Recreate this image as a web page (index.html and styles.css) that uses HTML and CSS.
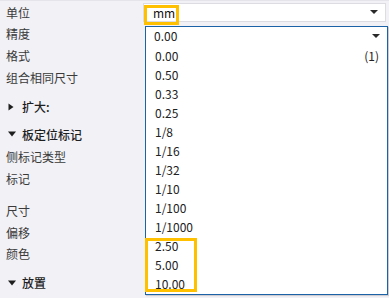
FILE: index.html
```html
<!DOCTYPE html>
<html lang="zh-CN">
<head>
    <meta charset="UTF-8">
    <title>尺寸精度</title>
    <link rel="stylesheet" href="styles.css">
</head>
<body>

<div class="panel">
    <!-- Property rows -->
    <div class="row first">
        <span class="label">单位</span>
        <div class="combo">
            <span class="combo-text">mm</span>
            <span class="arrow"></span>
        </div>
    </div>
    <div class="row"><span class="label">精度</span></div>
    <div class="row"><span class="label">格式</span></div>
    <div class="row"><span class="label">组合相同尺寸</span></div>

    <div class="row section s1">
        <svg class="tri" width="8" height="8" viewBox="0 0 8 8"><path d="M0.5 0.5 L5.5 4 L0.5 7.5 Z" fill="#1e1e1e"/></svg>
        <span class="heading">扩大:</span>
    </div>

    <div class="row section s2">
        <svg class="tri" width="8" height="8" viewBox="0 0 8 8"><path d="M0 1.5 L8 1.5 L4 6.5 Z" fill="#1e1e1e"/></svg>
        <span class="heading">板定位标记</span>
    </div>
    <div class="row tight"><span class="label">侧标记类型</span></div>
    <div class="row"><span class="label">标记</span></div>
    <div class="spacer"></div>
    <div class="row"><span class="label">尺寸</span></div>
    <div class="row"><span class="label">偏移</span></div>
    <div class="row"><span class="label">颜色</span></div>

    <div class="row section s3">
        <svg class="tri" width="8" height="8" viewBox="0 0 8 8"><path d="M0 1.5 L8 1.5 L4 6.5 Z" fill="#1e1e1e"/></svg>
        <span class="heading">放置</span>
    </div>

    <!-- Open precision dropdown -->
    <div class="dropdown">
        <div class="dd-head">
            <span>0.00</span>
            <span class="arrow"></span>
        </div>
        <ul class="dd-list">
            <li><span>0.00</span><span>(1)</span></li>
            <li>0.50</li>
            <li>0.33</li>
            <li>0.25</li>
            <li>1/8</li>
            <li>1/16</li>
            <li>1/32</li>
            <li>1/10</li>
            <li>1/100</li>
            <li>1/1000</li>
            <li>2.50</li>
            <li>5.00</li>
            <li>10.00</li>
        </ul>
    </div>

    <!-- Highlight marks -->
    <div class="mark mark-unit"></div>
    <div class="mark mark-values"></div>
</div>

</body>
</html>
```

FILE: styles.css
```css
body {
    margin: 0;
    background-color: #f1f1f6;
    font-family: "Noto Sans CJK SC", "Noto Sans", sans-serif;
    font-size: 12px;
    color: #333;
}
.panel {
    position: relative;
    width: 389px;
    height: 298px;
    overflow: hidden;
    border-top: 1px solid #e4e4ea;
    box-sizing: border-box;
}
.row {
    display: flex;
    align-items: center;
    height: 21.6px;
    padding-left: 6px;
}
.row.first {
    margin-top: 0.5px;
}
.label {
    width: 137px;
    color: #3a3a3a;
}
.section {
    padding-left: 8px;
    gap: 6px;
}
.s1 {
    margin-top: 8px;
}
.s2 {
    margin-top: 6px;
}
.s3 {
    margin-top: 7.2px;
}
.tight {
    margin-top: 0.8px;
}
.spacer {
    height: 10.8px;
}
.heading {
    color: #1e1e1e;
    font-weight: 500;
}
.tri {
    display: block;
}
.combo {
    flex: 1;
    display: flex;
    align-items: center;
    justify-content: space-between;
    height: 19px;
    margin-right: 3px;
    padding: 0 7px 0 9px;
    background: white;
    border: 1px solid #dcdce2;
    box-sizing: border-box;
}
.combo-text {
    color: #111;
}
.arrow {
    width: 0;
    height: 0;
    border-left: 4px solid transparent;
    border-right: 4px solid transparent;
    border-top: 4px solid #2a2a2a;
}
.dropdown {
    position: absolute;
    left: 145px;
    top: 25px;
    width: 241px;
    height: 267px;
    background: white;
    border: 1px solid #1b62a6;
    box-shadow: 1px 1px 1px rgba(0, 0, 0, 0.15);
    color: #222;
    overflow: hidden;
}
.dd-head {
    display: flex;
    align-items: center;
    justify-content: space-between;
    height: 17px;
    padding: 0 7px 0 8px;
}
.dd-list {
    list-style: none;
    margin: 1.5px 0 0;
    padding: 0;
}
.dd-list li {
    display: flex;
    align-items: center;
    justify-content: space-between;
    height: 19px;
    padding: 0 8px 0 9px;
}
.mark {
    position: absolute;
    border: 3px solid #ffc000;
    box-sizing: border-box;
}
.mark-unit {
    left: 144px;
    top: 4px;
    width: 35px;
    height: 20px;
}
.mark-values {
    left: 145px;
    top: 237px;
    width: 52px;
    height: 54px;
}
```
